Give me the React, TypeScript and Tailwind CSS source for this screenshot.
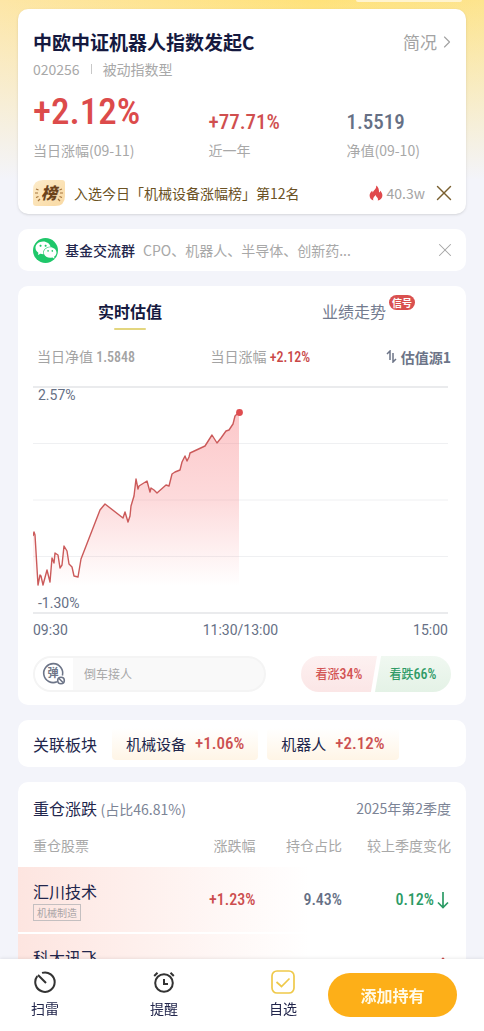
import React from "react";
import { ChevronRight, X } from "lucide-react";
import { AiFillWechat } from "react-icons/ai";

const NUM = "font-['Roboto_Condensed','Liberation_Sans_Narrow',Roboto,sans-serif]";

interface IStock {
  name: string;
  tag: string;
  change: string;
  ratio: string;
  diff: string;
  up: boolean;
}

const stocks: IStock[] = [
  { name: "汇川技术", tag: "机械制造", change: "+1.23%", ratio: "9.43%", diff: "0.12%", up: false },
  { name: "科大讯飞", tag: "计算机", change: "+0.88%", ratio: "9.07%", diff: "0.34%", up: true },
];

const LINE =
  "0,150 1,146 2,149 5,199 7,189 8,190 10,199 14,184 17,196 19,172 21,177 22,167 25,169 27,182 29,179 31,160 34,165 36,178 39,181 41,190 45,191 48,173 67,124 72,118 90,132 92,126 95,136 97,130 98,120 101,110 103,93 105,103 106,100 114,95 117,106 118,102 121,104 124,107 133,99 136,100 139,88 142,86 147,84 149,76 152,70 154,75 156,71 157,67 172,60 179,49 184,57 188,52 193,45 196,44 200,38 202,30 206,26";

const Card: React.FC<{ className?: string; children: React.ReactNode }> = ({ className = "", children }) => (
  <section className={`rounded-[10px] bg-white ${className}`}>{children}</section>
);

const FundHeader = () => (
  <Card className="px-[15px] pt-[19px] pb-2 shadow-sm">
    <div className="flex items-center justify-between">
      <h1 className="text-[19px] leading-7 font-bold text-[#15193f]">中欧中证机器人指数发起C</h1>
      <a href="#profile" className="-mr-[6px] flex items-center text-[17px] leading-7 text-[#a3a3a3]">
        简况
        <ChevronRight className="h-5 w-5" strokeWidth={1.4} />
      </a>
    </div>
    <div className="mt-[3px] flex items-center text-sm text-[#a8a8a8]">
      <span>020256</span>
      <span className="mx-[11px] h-[10px] w-px bg-[#c8c8c8]" />
      <span>被动指数型</span>
    </div>

    <div className="mt-[13px] flex items-end">
      <div className="w-[42%]">
        <p className={`${NUM} text-[37px] leading-10 font-medium text-[#dc4b4b]`}>+2.12%</p>
        <p className="mt-2 text-sm text-[#a8a8a8]">当日涨幅(09-11)</p>
      </div>
      <div className="w-[33%]">
        <p className={`${NUM} text-[21px] leading-5 font-medium text-[#d04f4f]`}>+77.71%</p>
        <p className="mt-2 text-sm text-[#a8a8a8]">近一年</p>
      </div>
      <div className="flex-1">
        <p className={`${NUM} text-[21px] leading-5 font-medium text-[#667085]`}>1.5519</p>
        <p className="mt-2 text-sm whitespace-nowrap text-[#a8a8a8]">净值(09-10)</p>
      </div>
    </div>

    <div className="mt-5 flex h-[26px] items-center">
      <svg viewBox="0 0 32 26" className="h-[26px] w-8">
        <defs>
          <linearGradient id="badge" x1="0" y1="0" x2="1" y2="1">
            <stop offset="0" stopColor="#fdecca" />
            <stop offset="1" stopColor="#f9d9a2" />
          </linearGradient>
        </defs>
        <path d="M10 0H29Q32 0 32 3V16Q32 26 22 26H3Q0 26 0 23V10Q0 0 10 0Z" fill="url(#badge)" />
        <text x="16" y="18.500" textAnchor="middle" fontSize="16" fontWeight="900" fontStyle="italic" fill="#6b431c">
          榜
        </text>
        <path
          d="M3 9 5.500 10M2 13H5M3 17.500 5.500 16.500M5 21 7 19M29 9 26.500 10M30 13H27M29 17.500 26.500 16.500M27 21 25 19"
          stroke="#a5743c"
          strokeWidth="1.200"
        />
      </svg>
      <p className="ml-[9px] text-sm text-[#6b5223]">入选今日「机械设备涨幅榜」第12名</p>
      <svg viewBox="0 0 14 16" className="ml-auto h-4 w-[14px]">
        <path
          d="M7.200.5C7.400 3 6.200 4.300 5 5.600 4.500 6.200 4.100 6.700 3.900 7.400 3.500 7 3.300 6.400 3.300 5.700 1.500 7.100.6 8.800.6 10.500c0 2.500 1.600 4.400 3.800 5.100-.8-1.800-.1-3.500 2.500-5.600 0 1.300.6 1.800 1.300 2.500.9.9 1 2 .5 3.100 2.800-.6 4.700-2.600 4.700-5.200 0-1.900-.9-3.400-2.200-4.700-.1.900-.5 1.500-1.200 1.900C10.200 4.600 9.400 2 7.200.5Z"
          fill="#e0494c"
        />
      </svg>
      <span className="ml-1 text-sm text-[#a3a3a3]">40.3w</span>
      <button type="button" aria-label="关闭榜单" className="-mr-[6px] ml-[6px]">
        <X className="h-[26px] w-[26px] text-[#7a6030]" strokeWidth={1.3} />
      </button>
    </div>
  </Card>
);

const GroupBar = () => (
  <Card className="flex h-[42px] items-center px-[15px]">
    <span className="flex h-[25px] w-[25px] items-center justify-center rounded-full bg-[#1fc76a]">
      <AiFillWechat className="h-6 w-6 text-white" />
    </span>
    <span className="ml-[7px] text-sm font-medium text-[#22264c]">基金交流群</span>
    <span className="ml-2 text-sm text-[#a8a8a8]">CPO、机器人、半导体、创新药...</span>
    <button type="button" aria-label="关闭交流群" className="-mr-[5px] ml-auto">
      <X className="h-[22px] w-[22px] text-[#a3a3a3]" strokeWidth={1.1} />
    </button>
  </Card>
);

const Chart = () => (
  <div className="mt-[19px] pr-[3px]">
    <div className="relative">
      <svg viewBox="0 0 415 228" className="block w-full">
        <defs>
          <linearGradient id="area" x1="0" y1="0" x2="0" y2="1">
            <stop offset="0" stopColor="#f87c80" stopOpacity="0.42" />
            <stop offset="0.5" stopColor="#f87c80" stopOpacity="0.28" />
            <stop offset="1" stopColor="#f87c80" stopOpacity="0" />
          </linearGradient>
        </defs>
        <path d="M0 1H415M0 227H415" stroke="#e3e5e7" strokeWidth="1.500" />
        <path d="M0 57.500H415M0 114H415M0 170.500H415" stroke="#eff0f2" />
        <polygon points={`0,200 ${LINE} 206,200`} fill="url(#area)" />
        <polyline points={LINE} fill="none" stroke="#cb5a5a" strokeWidth="1.400" strokeLinejoin="round" />
        <circle cx="206.500" cy="26.500" r="3.400" fill="#df4c4f" />
      </svg>
      <span className="absolute top-px left-[5px] font-[Roboto] text-sm leading-4 text-[#667085]">2.57%</span>
      <span className="absolute bottom-[3px] left-[5px] font-[Roboto] text-sm leading-4 text-[#667085]">-1.30%</span>
    </div>
    <div className="mt-[6px] flex justify-between font-[Roboto] text-sm text-[#667085]">
      <span>09:30</span>
      <span>11:30/13:00</span>
      <span>15:00</span>
    </div>
  </div>
);

const Valuation = () => (
  <Card className="pt-[13px] pb-[13px]">
    <div className="flex">
      <button type="button" className="flex flex-1 flex-col items-center text-base font-bold text-[#15193f]">
        实时估值
        <span className="mt-[5px] h-[2px] w-8 rounded bg-[#e3d67f]" />
      </button>
      <button type="button" className="flex flex-1 justify-center text-base text-[#737b8e]">
        <span className="relative">
          业绩走势
          <span className="absolute -top-1 left-full ml-[3px] rounded-full bg-[#d9504f] px-[3px] text-[10px] leading-[15px] font-bold whitespace-nowrap text-white">
            信号
          </span>
        </span>
      </button>
    </div>

    <div className="mt-4 flex items-center justify-between pr-[15px] pl-[19px] text-sm text-[#a3a3a3]">
      <p>
        当日净值 <span className={`${NUM} font-medium`}>1.5848</span>
      </p>
      <p>
        当日涨幅 <span className={`${NUM} font-medium text-[#c94747]`}>+2.12%</span>
      </p>
      <button type="button" className="flex items-center gap-1 font-bold text-[#6d7588]">
        <svg viewBox="0 0 11 13" className="h-[13px] w-[11px]" fill="none" stroke="currentColor" strokeWidth="1.500">
          <path d="M1 4 4 1V10M7 3V12L10 9" />
        </svg>
        估值源1
      </button>
    </div>

    <div className="px-[15px]">
      <Chart />
      <div className="mt-4 flex items-center justify-between">
        <div className="flex h-9 w-[233px] overflow-hidden rounded-full border-2 border-[#f4f4f4] bg-[#f9f9f9]">
          <button type="button" aria-label="弹幕" className="flex w-[38px] items-center justify-center bg-white">
            <svg viewBox="0 0 24 24" className="h-6 w-6" fill="none" stroke="#6d7588" strokeWidth="1.600">
              <path d="M15 19.800A9.500 9.500 0 1 1 20.400 13.500" />
              <text x="11" y="15" textAnchor="middle" fontSize="11" fontWeight="700" fill="#6d7588" stroke="none">
                弹
              </text>
              <circle cx="19" cy="18.500" r="3.300" />
              <path d="M16.700 16.200 21.300 20.800" />
            </svg>
          </button>
          <input
            aria-label="弹幕内容"
            placeholder="倒车接人"
            className="min-w-0 flex-1 bg-transparent px-[11px] text-xs placeholder:text-[#a8a8a8]"
          />
        </div>
        <div className="flex text-xs">
          <button
            type="button"
            className="-mr-[2px] h-9 w-[76px] rounded-l-full bg-linear-to-b from-[#fdf1f1] to-[#fbe6e6] font-medium text-[#d25353] [clip-path:polygon(0_0,100%_0,92%_100%,0_100%)]"
          >
            看涨<span className={`${NUM} text-sm font-medium`}>34%</span>
          </button>
          <button
            type="button"
            className="h-9 w-[76px] rounded-r-full bg-linear-to-b from-[#f0f8f1] to-[#e4f2e6] font-medium text-[#2f9b67] [clip-path:polygon(8%_0,100%_0,100%_100%,0_100%)]"
          >
            看跌<span className={`${NUM} text-sm font-medium`}>66%</span>
          </button>
        </div>
      </div>
    </div>
  </Card>
);

const Sectors = () => (
  <Card className="flex items-center px-[15px] pt-2 pb-[7px]">
    <h2 className="text-base text-[#22264c]">关联板块</h2>
    <a
      href="#machinery"
      className="ml-[15px] flex h-8 items-center gap-[9px] rounded bg-linear-to-b from-white to-[#fff5e6] px-[14px] text-[15px] text-[#22264c]"
    >
      机械设备 <span className={`${NUM} text-[17px] font-medium text-[#cc5050]`}>+1.06%</span>
    </a>
    <a
      href="#robot"
      className="ml-[9px] flex h-8 items-center gap-[9px] rounded bg-linear-to-b from-white to-[#fff5e6] px-[14px] text-[15px] text-[#22264c]"
    >
      机器人 <span className={`${NUM} text-[17px] font-medium text-[#cc5050]`}>+2.12%</span>
    </a>
  </Card>
);

const Holdings = () => (
  <Card className="overflow-hidden pt-[14px]">
    <div className="flex items-center justify-between px-[15px]">
      <h2 className="text-base text-[#22264c]">
        重仓涨跌 <span className="text-sm text-[#7c8496]">(占比46.81%)</span>
      </h2>
      <span className="text-sm text-[#7c8496]">2025年第2季度</span>
    </div>
    <table className="mt-[11px] w-full table-fixed text-right">
      <thead>
        <tr className="h-9 text-sm text-[#a8a8a8]">
          <th className="w-[34%] pb-2 pl-[15px] text-left font-normal">重仓股票</th>
          <th className="w-[19%] pb-2 font-normal">涨跌幅</th>
          <th className="pb-2 font-normal">持仓占比</th>
          <th className="w-[124px] pr-[15px] pb-2 font-normal">较上季度变化</th>
        </tr>
      </thead>
      <tbody>
        {stocks.map((s) => (
          <tr
            key={s.name}
            className={`${NUM} h-[66px] border-b-2 border-white bg-linear-to-r from-[#fde5e0] to-white to-65% text-[16px] font-medium`}
          >
            <td className="pl-[15px] text-left font-['Noto_Sans_CJK_SC',sans-serif] font-normal">
              <p className="text-base leading-6 text-[#22264c]">{s.name}</p>
              <span className="mt-px block w-fit border border-[#c4bfc0] px-[3px] text-[10px] leading-[15px] text-[#aaa5a7]">
                {s.tag}
              </span>
            </td>
            <td className="text-[#cc4d4d]">{s.change}</td>
            <td className="text-[#667085]">{s.ratio}</td>
            <td className={s.up ? "pr-[17px] text-[#cc4d4d]" : "pr-[17px] text-[#2b9b65]"}>
              <span className="flex items-center justify-end gap-[3px]">
                {s.diff}
                <svg
                  viewBox="0 0 12 18"
                  className={s.up ? "h-[18px] w-3 rotate-180" : "h-[18px] w-3"}
                  fill="none"
                  stroke="currentColor"
                  strokeWidth="1.700"
                >
                  <path d="M6 1V16M1 11.500 6 16.500 11 11.500" />
                </svg>
              </span>
            </td>
          </tr>
        ))}
      </tbody>
    </table>
  </Card>
);

const BottomBar = () => (
  <nav className="relative flex h-[72px] shrink-0 items-center bg-white pr-[27px] text-sm text-[#22264c] shadow-[0_-1px_3px_rgba(0,0,0,0.08)]">
    <div className="flex flex-1 justify-between pr-[31px] pb-[2px] pl-[31px]">
      <button type="button" className="flex flex-col items-center gap-1">
        <svg viewBox="0 0 24 24" className="h-6 w-6" fill="none" stroke="#333" strokeWidth="2">
          <path d="M9 2.900A9.700 9.700 0 1 1 4.300 6.200M5 5l8 8" />
        </svg>
        扫雷
      </button>
      <button type="button" className="flex flex-col items-center gap-1">
        <svg viewBox="0 0 24 24" className="h-6 w-6" fill="none" stroke="#333" strokeWidth="2">
          <circle cx="12" cy="13" r="8.800" />
          <path d="M12 9v5h4M2.200 6 5.500 2.700M21.800 6 18.500 2.700" />
        </svg>
        提醒
      </button>
      <button type="button" className="flex flex-col items-center gap-1">
        <svg viewBox="0 0 24 24" className="h-6 w-6" fill="none" stroke="#efc94a" strokeWidth="1.700">
          <rect x="1" y="1" width="22" height="22" rx="5" />
          <path d="M5.500 12 10.500 16.500 18.500 8.500" />
        </svg>
        自选
      </button>
    </div>
    <button type="button" className="h-11 w-[129px] rounded-full bg-[#fdaf18] text-base font-bold text-[#fffbe8]">
      添加持有
    </button>
  </nav>
);

export default function App() {
  return (
    <div className="flex h-screen flex-col bg-[#f3f4fa] font-['Noto_Sans_CJK_SC',sans-serif]">
      <main className="min-h-0 flex-1 overflow-y-auto [scrollbar-width:none]">
        <div className="bg-[linear-gradient(to_bottom,#f3f4fa00,#f3f4fa_180px),linear-gradient(to_right,#fde6a6,#ffe27a_65%,#fde48e)] px-[18px]">
          <div className="mr-1 ml-auto h-[2px] w-[106px] rounded-b-full bg-[#fff4cf]" />
          <div className="flex flex-col gap-[15px] pt-[7px]">
            <FundHeader />
            <GroupBar />
            <Valuation />
            <Sectors />
            <Holdings />
          </div>
        </div>
      </main>
      <BottomBar />
    </div>
  );
}
